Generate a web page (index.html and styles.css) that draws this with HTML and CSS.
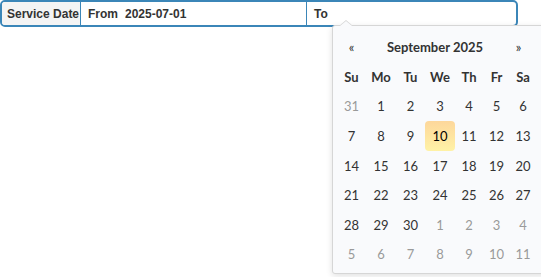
FILE: index.html
```html
<!DOCTYPE html>
<html lang="en">
<head>
    <meta charset="UTF-8">
    <meta name="viewport" content="width=device-width, initial-scale=1.0">
    <title>Service Date</title>
    <link rel="stylesheet" href="styles.css">
</head>
<body>
    <div class="filter">
        <div class="date-group">
            <span class="group-label">Service Date</span>
            <div class="group-cell from-cell">
                <span class="cell-prefix">From</span>
                <span class="cell-value">2025-07-01</span>
            </div>
            <div class="group-cell to-cell">
                <span class="cell-prefix">To</span>
            </div>
        </div>

        <div class="datepicker">
            <div class="dp-head">
                <span class="dp-nav">&laquo;</span>
                <span class="dp-title">September 2025</span>
                <span class="dp-nav">&raquo;</span>
            </div>
            <div class="dp-grid">
                <span class="dow">Su</span><span class="dow">Mo</span><span class="dow">Tu</span><span class="dow">We</span><span class="dow">Th</span><span class="dow">Fr</span><span class="dow">Sa</span>

                <span class="day old">31</span><span class="day">1</span><span class="day">2</span><span class="day">3</span><span class="day">4</span><span class="day">5</span><span class="day">6</span>
                <span class="day">7</span><span class="day">8</span><span class="day">9</span><span class="day today">10</span><span class="day">11</span><span class="day">12</span><span class="day">13</span>
                <span class="day">14</span><span class="day">15</span><span class="day">16</span><span class="day">17</span><span class="day">18</span><span class="day">19</span><span class="day">20</span>
                <span class="day">21</span><span class="day">22</span><span class="day">23</span><span class="day">24</span><span class="day">25</span><span class="day">26</span><span class="day">27</span>
                <span class="day">28</span><span class="day">29</span><span class="day">30</span><span class="day new">1</span><span class="day new">2</span><span class="day new">3</span><span class="day new">4</span>
                <span class="day new">5</span><span class="day new">6</span><span class="day new">7</span><span class="day new">8</span><span class="day new">9</span><span class="day new">10</span><span class="day new">11</span>
            </div>
        </div>
    </div>
</body>
</html>
```

FILE: styles.css
```css
body {
    margin: 0;
    padding: 0;
    background: #ffffff;
    font-family: 'Liberation Sans', Arial, sans-serif;
    color: #333333;
}
.filter {
    position: relative;
    width: 541px;
    height: 277px;
    overflow: hidden;
}
.date-group {
    display: flex;
    width: 518px;
    height: 27px;
    box-sizing: border-box;
    border: 2px solid #3b86b8;
    border-radius: 5px;
    overflow: hidden;
    font-size: 12px;
    font-weight: bold;
    white-space: nowrap;
}
.group-label {
    display: flex;
    align-items: center;
    flex-shrink: 0;
    width: 79px;
    padding-left: 5px;
    box-sizing: border-box;
    background: #f4f4f4;
    border-right: 1px solid #3b86b8;
    color: #333333;
}
.group-cell {
    display: flex;
    align-items: center;
    padding-left: 7px;
    box-sizing: border-box;
}
.from-cell {
    flex-shrink: 0;
    width: 226px;
    border-right: 1px solid #3b86b8;
}
.to-cell {
    flex: 1;
}
.cell-value {
    margin-left: 7px;
}
.datepicker {
    position: absolute;
    left: 332px;
    top: 25px;
    width: 214px;
    padding: 6px 4px 4px 4px;
    background: #f9fafc;
    border: 1px solid #d6d6d6;
    border-radius: 3px;
    box-shadow: 0 2px 6px rgba(0, 0, 0, 0.12);
    font-family: 'Lato', 'Open Sans', sans-serif;
    font-size: 13px;
    color: #333333;
}
.datepicker:before {
    content: '';
    position: absolute;
    top: -6px;
    left: 6px;
    border-left: 7px solid transparent;
    border-right: 7px solid transparent;
    border-bottom: 6px solid #d6d6d6;
}
.datepicker:after {
    content: '';
    position: absolute;
    top: -5px;
    left: 7px;
    border-left: 6px solid transparent;
    border-right: 6px solid transparent;
    border-bottom: 5px solid #f9fafc;
}
.dp-head {
    display: flex;
    align-items: center;
    justify-content: space-between;
    width: 196px;
    height: 30px;
}
.dp-nav {
    width: 29px;
    text-align: center;
    font-size: 13px;
}
.dp-title {
    font-weight: bold;
}
.dp-grid {
    display: grid;
    grid-template-columns: 29px 30px 29px 30px 28px 27px 26px;
    grid-auto-rows: 29.6px;
}
.dp-grid .dow {
    height: 30px;
    display: flex;
    align-items: center;
    justify-content: center;
    font-weight: bold;
}
.day {
    display: flex;
    align-items: center;
    justify-content: center;
    border-radius: 4px;
}
.day.old,
.day.new {
    color: #9a9a9a;
}
.day.today {
    background: linear-gradient(to bottom, #fdd79b, #fff2a6);
    color: #000000;
}
```
